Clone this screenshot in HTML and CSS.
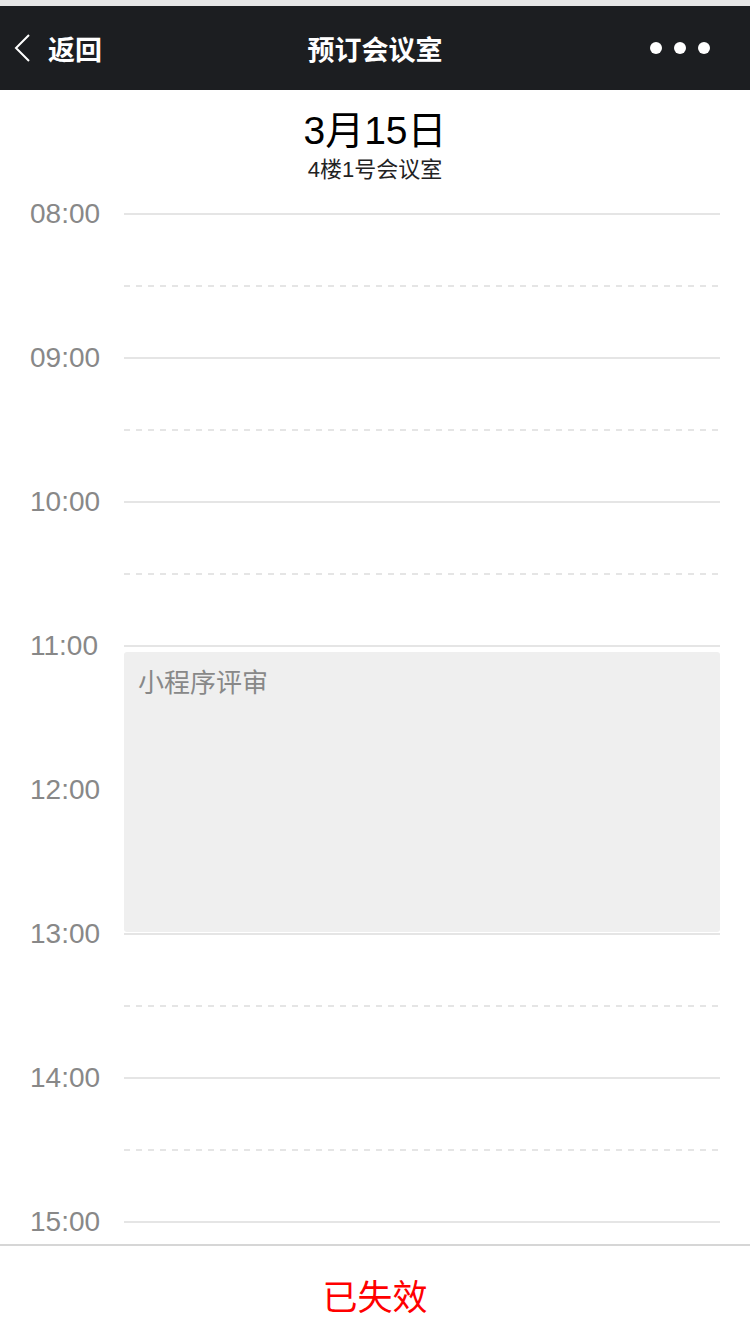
FILE: index.html
```html
<!DOCTYPE html>
<html lang="zh">
<head>
<meta charset="utf-8">
<title>预订会议室</title>
<link rel="stylesheet" href="styles.css">
</head>
<body>
<div class="page">
  <div class="status-strip"></div>
  <header class="navbar">
    <div class="nav-left">
      <svg class="chevron" width="18" height="30" viewBox="0 0 18 30"><path d="M15 2 L2 15 L15 28" fill="none" stroke="#fff" stroke-width="2"/></svg>
      <span class="back-text">返回</span>
    </div>
    <div class="nav-title">预订会议室</div>
    <div class="nav-more"><span class="dot"></span><span class="dot"></span><span class="dot"></span></div>
  </header>
  <main class="content">
    <section class="day-head">
      <div class="date">3月15日</div>
      <div class="room">4楼1号会议室</div>
    </section>
    <section class="timeline">
      <div class="hour"><div class="time">08:00</div><div class="track"><div class="solid"></div><div class="dash"></div></div></div>
      <div class="hour"><div class="time">09:00</div><div class="track"><div class="solid"></div><div class="dash"></div></div></div>
      <div class="hour"><div class="time">10:00</div><div class="track"><div class="solid"></div><div class="dash"></div></div></div>
      <div class="hour"><div class="time">11:00</div><div class="track"><div class="solid"></div><div class="dash"></div></div></div>
      <div class="hour"><div class="time">12:00</div><div class="track"><div class="solid"></div><div class="dash"></div></div></div>
      <div class="hour"><div class="time">13:00</div><div class="track"><div class="solid"></div><div class="dash"></div></div></div>
      <div class="hour"><div class="time">14:00</div><div class="track"><div class="solid"></div><div class="dash"></div></div></div>
      <div class="hour"><div class="time">15:00</div><div class="track"><div class="solid"></div><div class="dash"></div></div></div>
      <div class="event">小程序评审</div>
    </section>
  </main>
  <footer class="footer">
    <span class="status">已失效</span>
  </footer>
</div>
</body>
</html>
```
FILE: styles.css
```css
* { box-sizing: border-box; }
html, body { margin: 0; padding: 0; }
body {
  width: 750px;
  height: 1342px;
  background: #fff;
  font-family: "Liberation Sans", "Noto Sans CJK SC", sans-serif;
  overflow: hidden;
}
.page {
  height: 1342px;
  display: flex;
  flex-direction: column;
}
.status-strip {
  height: 6px;
  background: #e6e6e6;
  flex: none;
}
.navbar {
  height: 84px;
  flex: none;
  background: #1c1e21;
  color: #fff;
  display: flex;
  align-items: center;
  justify-content: space-between;
  padding: 0 40px 0 14px;
  position: relative;
}
.nav-left {
  display: flex;
  align-items: center;
  gap: 16px;
}
.chevron { display: block; }
.back-text {
  font-size: 27px;
  font-weight: bold;
}
.nav-title {
  position: absolute;
  left: 0;
  right: 0;
  text-align: center;
  font-size: 27px;
  font-weight: bold;
  pointer-events: none;
}
.nav-more {
  display: flex;
  gap: 12px;
}
.dot {
  width: 12px;
  height: 12px;
  border-radius: 50%;
  background: #fff;
}
.content {
  flex: 1;
  overflow: hidden;
}
.day-head {
  padding: 18px 0 15px;
  text-align: center;
}
.date {
  font-size: 39px;
  line-height: 46px;
  color: #000;
}
.room {
  margin-top: 2px;
  font-size: 22px;
  line-height: 28px;
  color: #222;
}
.timeline {
  position: relative;
}
.hour {
  display: flex;
  height: 144px;
}
.time {
  width: 124px;
  padding-left: 30px;
  height: 30px;
  line-height: 30px;
  font-size: 28px;
  color: #888;
}
.track {
  flex: 1;
  margin-right: 30px;
  padding-top: 14px;
}
.solid {
  height: 2px;
  background: #e5e5e5;
}
.dash {
  margin-top: 70px;
  height: 2px;
  background: repeating-linear-gradient(to right, #e5e5e5 0 6px, transparent 6px 12px);
}
.event {
  position: absolute;
  top: 453px;
  left: 124px;
  right: 30px;
  height: 280px;
  background: #efefef;
  border-radius: 3px;
  padding: 14px 14px;
  font-size: 26px;
  line-height: 34px;
  color: #888;
}
.footer {
  height: 98px;
  flex: none;
  border-top: 2px solid #d6d6d6;
  display: flex;
  align-items: center;
  justify-content: center;
}
.status {
  color: #ff0000;
  font-size: 35px;
}
```
